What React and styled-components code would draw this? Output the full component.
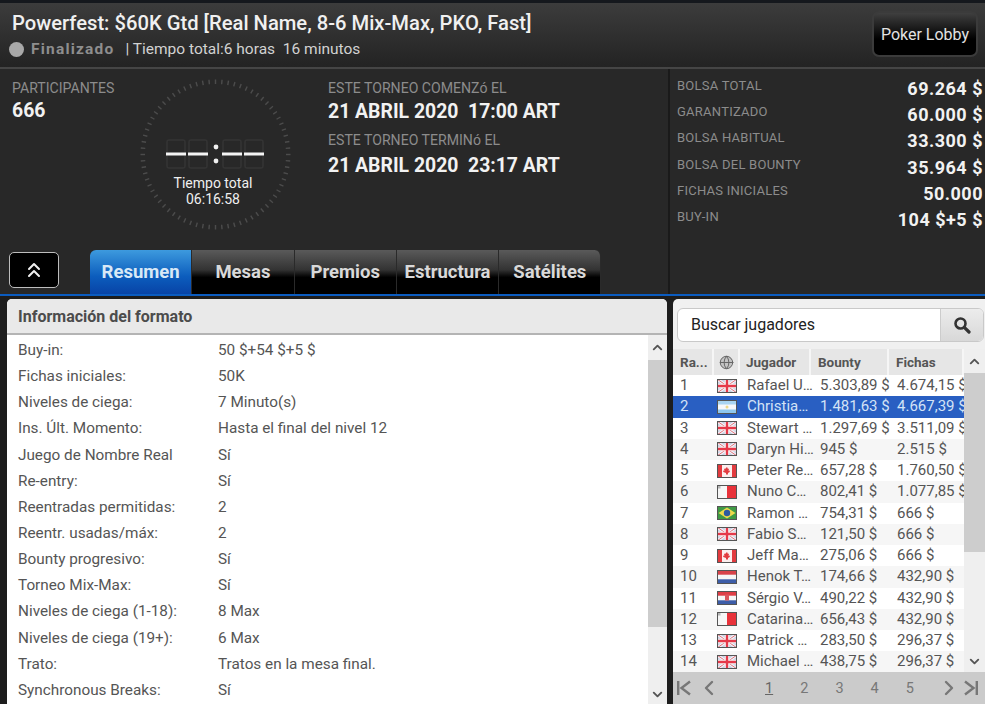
import React from "react";
import styled, { createGlobalStyle } from "styled-components";
import { ChevronUp, ChevronDown, ChevronsUp, ChevronLeft, ChevronRight, Globe } from "lucide-react";

const Global = createGlobalStyle`
  html, body { margin: 0; padding: 0; background: #1d1d1d; }
  body { font-family: Roboto, "Liberation Sans", sans-serif; overflow: hidden; }
  * { box-sizing: border-box; }
`;

const Page = styled.div`
  width: 985px; height: 704px; overflow: hidden; display: flex; flex-direction: column;
  background: #1d1d1d; border-top: 3px solid #15181d;
`;
const Header = styled.header`
  height: 66px; flex: none; display: flex; justify-content: space-between; align-items: flex-start;
  padding: 8px 7px 0 12px;
  background: linear-gradient(#3c3c3c, #232323);
  border-bottom: 2px solid #454545;
`;
const Title = styled.h1`
  margin: 0; font-size: 20.2px; line-height: 24px; font-weight: 500; color: #f0f0f0; white-space: nowrap;
`;
const StatusLine = styled.div`
  display: flex; align-items: center; margin: 5px 0 0 -3px; font-size: 15.5px; line-height: 18px; color: #d2d2d2;
`;
const StatusDot = styled.span`
  width: 15px; height: 15px; border-radius: 50%; background: #a8a8a8; margin-right: 7px;
`;
const StatusName = styled.span`
  font-weight: 700; color: #8e8e8e; letter-spacing: 1.2px; margin-right: 11px;
`;
const LobbyButton = styled.button`
  width: 106px; height: 46px; margin-top: 0; border-radius: 7px; border: 2px solid #3b3b3b;
  background: linear-gradient(#3f3f3f, #000 62%); color: #e2e2e2;
  font: 400 16px Roboto, sans-serif; padding: 0;
`;
const Info = styled.section`
  height: 225px; flex: none; display: flex; background: #282828;
`;
const InfoMain = styled.div`
  width: 670px; flex: none; display: flex; flex-direction: column; border-right: 2px solid #1a1a1a;
`;
const InfoTop = styled.div`
  flex: 1; display: flex; padding: 10px 0 0 12px;
`;
const Participants = styled.div`
  width: 128px; flex: none;
`;
const MutedLabel = styled.div`
  font-size: 14.1px; line-height: 18px; color: #8c8c8c; white-space: nowrap;
`;
const BigValue = styled.div`
  font-size: 19.4px; line-height: 24px; font-weight: 700; color: #f2f2f2; white-space: nowrap;
  margin-top: ${p => p.$gap}px;
`;
const Clock = styled.div`
  position: relative; width: 151px; height: 151px; flex: none;
`;
const ClockText = styled.div`
  position: absolute; left: 0; right: 5px; top: 96px; text-align: center;
  font-size: 14px; line-height: 16px; color: #efefef;
`;
const Dates = styled.div`
  margin-left: 37px;
`;
const DateBlock = styled.div`
  margin-bottom: ${p => p.$gap}px;
`;
const TabBar = styled.div`
  flex: none; height: 44px; display: flex; align-items: flex-end; padding-left: 9px;
`;
const Collapse = styled.button`
  width: 50px; height: 36px; margin-bottom: 6px; margin-right: 31px; border-radius: 5px;
  border: 1.5px solid #bdbdbd; background: #000; color: #f0f0f0; padding: 0;
  display: flex; align-items: center; justify-content: center;
`;
const Tab = styled.div`
  width: 102.3px; height: 44px; display: flex; align-items: center; justify-content: center;
  font-size: 18.5px; font-weight: 700; white-space: nowrap;
  border-radius: ${p => p.$first ? "6px 0 0 0" : p.$last ? "0 6px 0 0" : "0"};
  border-right: 1px solid #2a2a2a;
  color: ${p => p.$active ? "#d8e8f6" : "#d9d9d9"};
  background: ${p => p.$active
    ? "linear-gradient(#3d9ade, #0c5dbd 60%, #0843a6)"
    : "linear-gradient(#5a5a5a, #333 45%, #000 62%)"};
`;
const Stats = styled.div`
  flex: 1; padding: 6px 2px 0 7px; display: grid; grid-auto-rows: 26.2px; align-content: start;
`;
const StatRow = styled.div`
  display: flex; justify-content: space-between; align-items: flex-start;
`;
const StatLabel = styled.span`
  font-size: 13px; line-height: 22px; color: #8c8c8c; letter-spacing: 0.25px;
`;
const StatValue = styled.span`
  font-size: 18px; line-height: 28px; font-weight: 700; color: #f2f2f2; letter-spacing: 0.5px;
`;
const BlueLine = styled.div`
  height: 2px; flex: none; background: #0b5cc0;
`;
const Bottom = styled.main`
  flex: 1; min-height: 0; display: flex; gap: 6px; padding: 3px 0 0 7px; background: #1d1d1d;
`;
const FormatPanel = styled.section`
  width: 660px; flex: none; display: flex; flex-direction: column; background: #fff;
  border-radius: 5px 5px 0 0; overflow: hidden;
`;
const PanelTitle = styled.div`
  height: 36px; flex: none; background: #e9e9e9; border-bottom: 2px solid #b4b4b4;
  padding: 0 11px; font-size: 16px; line-height: 35px; font-weight: 700; color: #4c4c4c;
`;
const FormatBody = styled.div`
  flex: 1; min-height: 0; display: flex; overflow: hidden;
`;
const FormatRows = styled.div`
  flex: 1; padding: 2px 0 0 11px; display: grid; grid-auto-rows: 26.15px; align-content: start;
`;
const FormatRow = styled.div`
  display: grid; grid-template-columns: 200px 1fr; font-size: 15.3px; line-height: 26px; color: #555; white-space: nowrap;
`;
const Scrollbar = styled.div`
  width: ${p => p.$w}px; flex: none; background: #efefef; display: flex; flex-direction: column; align-items: center; color: #555;
`;
const ScrollArrow = styled.div`
  height: ${p => p.$h}px; flex: none; display: flex; align-items: center; justify-content: center;
`;
const Thumb = styled.div`
  width: 100%; height: ${p => p.$h}px; flex: none; background: #cdcdcd;
`;
const ScrollGap = styled.div`flex: 1;`;
const PlayersPanel = styled.section`
  flex: 1; min-width: 0; display: flex; flex-direction: column; background: #f0f0f0;
  border-radius: 5px 0 0 0; overflow: hidden;
`;
const SearchWrap = styled.div`
  flex: none; height: 50px; padding: 9px 1px 7px 4px;
`;
const SearchBox = styled.div`
  height: 34px; display: flex; border: 1px solid #c9c9c9; border-radius: 6px; background: #fff; overflow: hidden;
`;
const SearchText = styled.div`
  flex: 1; padding-left: 13px; font-size: 16px; line-height: 32px; color: #222;
`;
const SearchBtn = styled.div`
  width: 43px; display: flex; align-items: center; justify-content: center;
  background: linear-gradient(#ececec, #d8d8d8); border-left: 1px solid #ccc;
`;
const TableArea = styled.div`
  flex: 1; min-height: 0; display: flex;
`;
const TableMain = styled.div`
  width: 291px; flex: none; background: #fff;
`;
const cols = "41px 26px 71px 78px 75px";
const HeadRow = styled.div`
  height: 26px; display: grid; grid-template-columns: ${cols}; background: #e6e6e6;
`;
const HeadCell = styled.div`
  font-size: 13.5px; line-height: 23px; font-weight: 700; color: #555; padding-left: ${p => p.$pad}px;
  white-space: nowrap; border-right: 2px solid #f6f6f6; display: flex; align-items: center;
  justify-content: ${p => p.$center ? "center" : "flex-start"};
`;
const PlayerRow = styled.div`
  height: 21.25px; display: grid; grid-template-columns: ${cols}; overflow: hidden;
  font-size: 15px; line-height: 21px; white-space: nowrap;
  color: ${p => p.$sel ? "#d3e3f6" : "#555"};
  background: ${p => p.$sel ? "#295fc2" : p.$alt ? "#f6f6f6" : "#fff"};
`;
const Cell = styled.div`
  padding-left: ${p => p.$pad}px; display: flex; align-items: center;
`;
const Pager = styled.nav`
  flex: none; height: 32px; background: #cbcbcb; display: flex; align-items: center; color: #777;
  padding-left: 3px;
`;
const PagerNums = styled.div`
  display: flex; align-items: center; width: 149px; flex: none; justify-content: space-between; margin: 0 23px 0 44px;
`;
const PageNum = styled.span`
  font-size: 14.5px; color: ${p => p.$cur ? "#666" : "#777"};
  text-decoration: ${p => p.$cur ? "underline" : "none"};
`;
const PrevIcon = styled(ChevronLeft)`margin-left: 5px;`;
const LastWrap = styled.span`display: flex; margin-left: 2px;`;

const Ticks = () => {
  const ticks = Array.from({ length: 72 }, (_, i) => {
    const a = (i / 72) * Math.PI * 2;
    const c = 75.5;
    return <line key={i} x1={c + Math.cos(a) * 70.5} y1={c + Math.sin(a) * 70.5} x2={c + Math.cos(a) * 75} y2={c + Math.sin(a) * 75} stroke="#4c4c4c" strokeWidth="1.4" />;
  });
  const digit = x => (
    <g key={x}>
      <rect x={x} y="61" width="18" height="28" rx="2" fill="none" stroke="#343434" strokeWidth="1.5" />
      <line x1={x - 1} y1="75" x2={x + 19} y2="75" stroke="#f4f4f4" strokeWidth="3" />
    </g>
  );
  return (
    <svg width="151" height="151" viewBox="0 0 151 151">
      {ticks}
      {[27, 49, 83, 105].map(digit)}
      <circle cx="76" cy="68" r="2.4" fill="#f0f0f0" />
      <circle cx="76" cy="82" r="2.4" fill="#f0f0f0" />
    </svg>
  );
};

const FlagFrame = styled.svg`
  width: 20px; height: 14px; display: block;
`;
const Flag = ({ c }) => {
  const inner = {
    gb: <>
      <rect width="20" height="14" fill="#c9d0e4" />
      <path d="M0 0L20 14M20 0L0 14" stroke="#f4f4f8" strokeWidth="3" />
      <path d="M0 0L20 14M20 0L0 14" stroke="#e0707a" strokeWidth="1" />
      <path d="M10 0V14M0 7H20" stroke="#f8f8f8" strokeWidth="4.5" />
      <path d="M10 0V14M0 7H20" stroke="#e5394a" strokeWidth="2.4" />
    </>,
    ar: <>
      <rect width="20" height="14" fill="#f6f8fb" />
      <rect width="20" height="4.5" fill="#a8d4f2" />
      <rect y="9.5" width="20" height="4.5" fill="#8ec7ee" />
      <circle cx="10" cy="7" r="1.5" fill="#ecd98a" />
    </>,
    ca: <>
      <rect width="20" height="14" fill="#fbeeee" />
      <rect width="5" height="14" fill="#e23b3f" />
      <rect x="15" width="5" height="14" fill="#e23b3f" />
      <path d="M10 3l1 2 1-.5-.4 2.5 1.4-.5-.3 1.5L11 9v1.5H9V9L6.3 8l-.3-1.5 1.4.5-.4-2.5 1 .5z" fill="#e23b3f" />
    </>,
    pt: <>
      <rect width="20" height="14" fill="#f6f6f6" />
      <rect x="10" width="10" height="14" fill="#e8323a" />
      <rect x="1" y="1" width="2.5" height="2.5" fill="#b5b5b5" />
    </>,
    br: <>
      <rect width="20" height="14" fill="#3f9a45" />
      <path d="M10 1.5L18.5 7L10 12.5L1.5 7z" fill="#eed94a" />
      <circle cx="10" cy="7" r="3.2" fill="#2d5aa0" />
    </>,
    nl: <>
      <rect width="20" height="14" fill="#f6f6f6" />
      <rect width="20" height="4.7" fill="#d8434a" />
      <rect y="9.3" width="20" height="4.7" fill="#3d5da8" />
    </>,
    hr: <>
      <rect width="20" height="14" fill="#f6f6f6" />
      <rect width="20" height="4.7" fill="#df3e46" />
      <rect y="9.3" width="20" height="4.7" fill="#3d5da8" />
      <rect x="8" y="3.5" width="4" height="6" fill="#d9565c" />
    </>,
  }[c];
  return (
    <FlagFrame viewBox="0 0 20 14">
      {inner}
      <rect x="0.5" y="0.5" width="19" height="13" fill="none" stroke="#555" strokeWidth="1" />
    </FlagFrame>
  );
};

const FirstIcon = () => (
  <svg width="16" height="18" viewBox="0 0 16 18" fill="none" stroke="currentColor" strokeWidth="2.4">
    <path d="M2.2 2V16M14 2.5L5.5 9L14 15.5" />
  </svg>
);
const LastIcon = () => (
  <svg width="16" height="18" viewBox="0 0 16 18" fill="none" stroke="currentColor" strokeWidth="2.4">
    <path d="M13.8 2V16M2 2.5L10.5 9L2 15.5" />
  </svg>
);
const SearchIcon = () => (
  <svg width="18" height="18" viewBox="0 0 18 18" fill="none" stroke="#333" strokeWidth="2.6">
    <circle cx="7.5" cy="7.5" r="5" />
    <path d="M11.3 11.3L16 16" strokeWidth="3.2" strokeLinecap="round" />
  </svg>
);

const format = [
  ["Buy-in:", "50 $+54 $+5 $"],
  ["Fichas iniciales:", "50K"],
  ["Niveles de ciega:", "7 Minuto(s)"],
  ["Ins. Últ. Momento:", "Hasta el final del nivel 12"],
  ["Juego de Nombre Real", "Sí"],
  ["Re-entry:", "Sí"],
  ["Reentradas permitidas:", "2"],
  ["Reentr. usadas/máx:", "2"],
  ["Bounty progresivo:", "Sí"],
  ["Torneo Mix-Max:", "Sí"],
  ["Niveles de ciega (1-18):", "8 Max"],
  ["Niveles de ciega (19+):", "6 Max"],
  ["Trato:", "Tratos en la mesa final."],
  ["Synchronous Breaks:", "Sí"],
];
const stats = [
  ["BOLSA TOTAL", "69.264 $"],
  ["GARANTIZADO", "60.000 $"],
  ["BOLSA HABITUAL", "33.300 $"],
  ["BOLSA DEL BOUNTY", "35.964 $"],
  ["FICHAS INICIALES", "50.000"],
  ["BUY-IN", "104 $+5 $"],
];
const players = [
  ["gb", "Rafael U…", "5.303,89 $", "4.674,15 $"],
  ["ar", "Christia…", "1.481,63 $", "4.667,39 $"],
  ["gb", "Stewart …", "1.297,69 $", "3.511,09 $"],
  ["gb", "Daryn Hi…", "945 $", "2.515 $"],
  ["ca", "Peter Re…", "657,28 $", "1.760,50 $"],
  ["pt", "Nuno C…", "802,41 $", "1.077,85 $"],
  ["br", "Ramon …", "754,31 $", "666 $"],
  ["gb", "Fabio S…", "121,50 $", "666 $"],
  ["ca", "Jeff Ma…", "275,06 $", "666 $"],
  ["nl", "Henok T…", "174,66 $", "432,90 $"],
  ["hr", "Sérgio V…", "490,22 $", "432,90 $"],
  ["pt", "Catarina…", "656,43 $", "432,90 $"],
  ["gb", "Patrick …", "283,50 $", "296,37 $"],
  ["gb", "Michael …", "438,75 $", "296,37 $"],
];
const tabs = ["Resumen", "Mesas", "Premios", "Estructura", "Satélites"];

export default function App() {
  return (
    <Page>
      <Global />
      <Header>
        <div>
          <Title>Powerfest: $60K Gtd [Real Name, 8-6 Mix-Max, PKO, Fast]</Title>
          <StatusLine>
            <StatusDot />
            <StatusName>Finalizado</StatusName>
            <span>| Tiempo total:6 horas&nbsp; 16 minutos</span>
          </StatusLine>
        </div>
        <LobbyButton>Poker Lobby</LobbyButton>
      </Header>
      <Info>
        <InfoMain>
          <InfoTop>
            <Participants>
              <MutedLabel>PARTICIPANTES</MutedLabel>
              <BigValue $gap={2}>666</BigValue>
            </Participants>
            <Clock>
              <Ticks />
              <ClockText>Tiempo total<br />06:16:58</ClockText>
            </Clock>
            <Dates>
              <DateBlock $gap={7}>
                <MutedLabel>ESTE TORNEO COMENZó EL</MutedLabel>
                <BigValue $gap={3}>21 ABRIL 2020&nbsp; 17:00 ART</BigValue>
              </DateBlock>
              <DateBlock $gap={0}>
                <MutedLabel>ESTE TORNEO TERMINó EL</MutedLabel>
                <BigValue $gap={5}>21 ABRIL 2020&nbsp; 23:17 ART</BigValue>
              </DateBlock>
            </Dates>
          </InfoTop>
          <TabBar>
            <Collapse><ChevronsUp size={24} strokeWidth={2} /></Collapse>
            {tabs.map((t, i) => (
              <Tab key={t} $active={i === 0} $first={i === 0} $last={i === tabs.length - 1}>{t}</Tab>
            ))}
          </TabBar>
        </InfoMain>
        <Stats>
          {stats.map(([l, v]) => (
            <StatRow key={l}><StatLabel>{l}</StatLabel><StatValue>{v}</StatValue></StatRow>
          ))}
        </Stats>
      </Info>
      <BlueLine />
      <Bottom>
        <FormatPanel>
          <PanelTitle>Información del formato</PanelTitle>
          <FormatBody>
            <FormatRows>
              {format.map(([l, v]) => (
                <FormatRow key={l}><span>{l}</span><span>{v}</span></FormatRow>
              ))}
            </FormatRows>
            <Scrollbar $w={19}>
              <ScrollArrow $h={25}><ChevronUp size={15} strokeWidth={3} /></ScrollArrow>
              <Thumb $h={267} />
              <ScrollGap />
              <ScrollArrow $h={20}><ChevronDown size={15} strokeWidth={3} /></ScrollArrow>
            </Scrollbar>
          </FormatBody>
        </FormatPanel>
        <PlayersPanel>
          <SearchWrap>
            <SearchBox>
              <SearchText>Buscar jugadores</SearchText>
              <SearchBtn><SearchIcon /></SearchBtn>
            </SearchBox>
          </SearchWrap>
          <TableArea>
            <TableMain>
              <HeadRow>
                <HeadCell $pad={7}>Ra...</HeadCell>
                <HeadCell $center><Globe size={15} color="#666" fill="#c4c4c4" strokeWidth={1.6} /></HeadCell>
                <HeadCell $pad={6}>Jugador</HeadCell>
                <HeadCell $pad={7}>Bounty</HeadCell>
                <HeadCell $pad={7}>Fichas</HeadCell>
              </HeadRow>
              {players.map((p, i) => (
                <PlayerRow key={i} $sel={i === 1} $alt={i % 2 === 1}>
                  <Cell $pad={7}>{i + 1}</Cell>
                  <Cell $pad={3}><Flag c={p[0]} /></Cell>
                  <Cell $pad={7}>{p[1]}</Cell>
                  <Cell $pad={9}>{p[2]}</Cell>
                  <Cell $pad={8}>{p[3]}</Cell>
                </PlayerRow>
              ))}
            </TableMain>
            <Scrollbar $w={21}>
              <ScrollArrow $h={24}><ChevronUp size={15} strokeWidth={3} /></ScrollArrow>
              <Thumb $h={179} />
              <ScrollGap />
              <ScrollArrow $h={22}><ChevronDown size={15} strokeWidth={3} /></ScrollArrow>
            </Scrollbar>
          </TableArea>
          <Pager>
            <FirstIcon />
            <PrevIcon size={24} strokeWidth={2.4} />
            <PagerNums>
              {[1, 2, 3, 4, 5].map(n => <PageNum key={n} $cur={n === 1}>{n}</PageNum>)}
            </PagerNums>
            <ChevronRight size={24} strokeWidth={2.4} />
            <LastWrap><LastIcon /></LastWrap>
          </Pager>
        </PlayersPanel>
      </Bottom>
    </Page>
  );
}
